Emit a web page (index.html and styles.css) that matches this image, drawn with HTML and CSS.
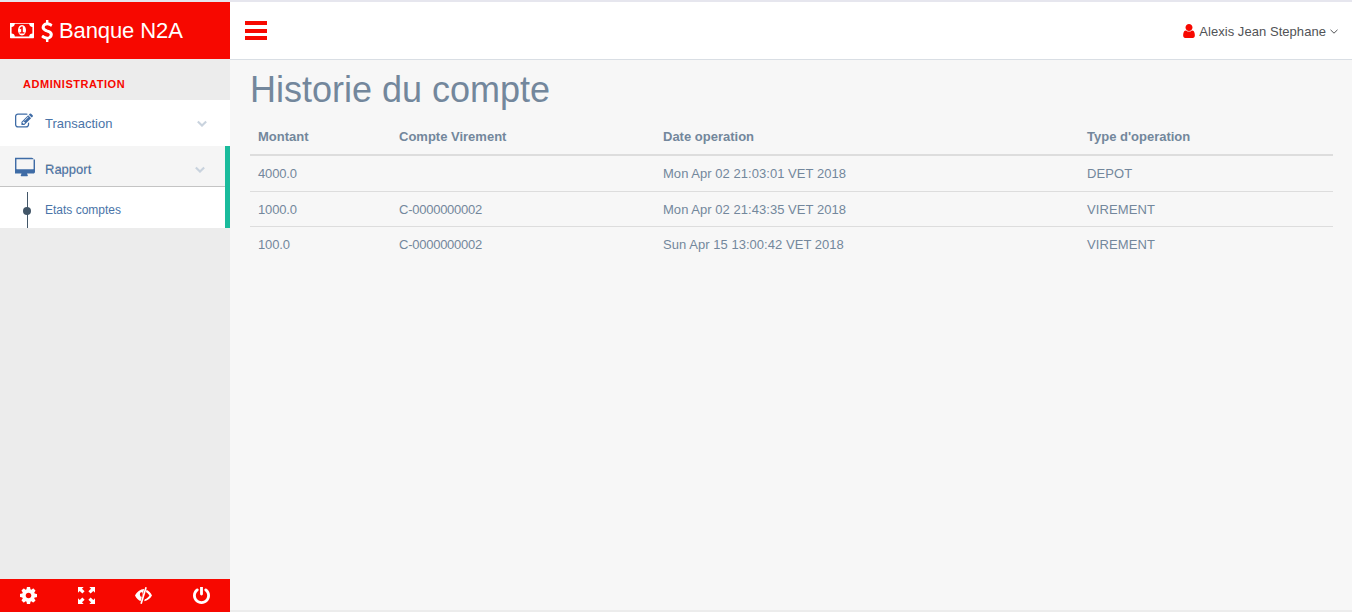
FILE: index.html
```html
<!DOCTYPE html>
<html lang="fr">
<head>
    <meta charset="UTF-8">
    <title>Banque N2A</title>
    <link rel="stylesheet" href="styles.css">
</head>
<body>
    <div class="layout">
        <aside class="sidebar">
            <div class="brand">
                <svg class="brand-money" viewBox="64 320 1920 1280"><path d="M832 1152h384v-96h-128v-448h-114l-148 137 77 80q42-37 55-57h2v288h-128v96zm512-256q0 70-21 142t-59.500 134-101.500 101-138 39-138-39-101.500-101-59.500-134-21-142 21-142 59.500-134 101.500-101 138-39 138 39 101.500 101 59.500 134 21 142zm512 256v-512q-106 0-181-75t-75-181h-1152q0 106-75 181t-181 75v512q106 0 181 75t75 181h1152q0-106 75-181t181-75zm128-832v1152q0 26-19 45t-45 19h-1792q-26 0-45-19t-19-45v-1152q0-26 19-45t45-19h1792q26 0 45 19t19 45z"/></svg>
                <svg class="brand-dollar" viewBox="320 0 1056 1792"><path d="M1362 1185q0 153-99.500 263.500t-258.500 136.500v175q0 14-9 23t-23 9h-135q-13 0-22.500-9.500t-9.500-22.500v-175q-66-9-127.500-31t-101.500-44.500-74-48-46.500-37.500-17.500-18q-17-21-2-41l103-135q7-10 23-12 15-2 24 9l2 2q113 99 243 125 37 8 74 8 81 0 142.500-43t61.500-122q0-28-15-53t-33.500-42-58.500-37.500-66-32-80-32.500q-39-16-61.500-25t-61.500-26.500-62.500-31-56.500-35.500-53.500-42.500-43.500-49-35.500-58-21-66.500-8.500-78q0-138 98-242t255-134v-180q0-13 9.500-22.500t22.500-9.500h135q14 0 23 9t9 23v176q57 6 110.500 23t87 33.500 63.500 37.500 39 29 15 14q17 18 5 38l-81 146q-8 15-23 16-14 3-27-7-3-3-14.500-12t-39-26.500-58.500-32-74.500-26-85.500-11.500q-95 0-155 43t-60 111q0 26 8.500 48t29.500 41.500 39.500 33 56 31 60.500 27 70 27.500q53 20 81 31.500t76 35 75.500 42.500 62 50 53 63.500 31.500 76.500 13 94z"/></svg>
                <span class="brand-name">Banque N2A</span>
            </div>
            <h3 class="menu-title">ADMINISTRATION</h3>
            <div class="menu-item">
                <svg class="menu-icon menu-icon-edit" viewBox="0 128 1792 1408"><path d="M888 1184l116-116-152-152-116 116v56h96v96h56zm440-720q-16-16-33 1l-350 350q-17 17-1 33t33-1l350-350q17-17 1-33zm80 594v190q0 119-84.500 203.500t-203.500 84.500h-832q-119 0-203.500-84.500t-84.500-203.500v-832q0-119 84.500-203.500t203.500-84.500h832q63 0 117 25 15 7 18 23 3 17-9 29l-49 49q-14 14-32 8-23-6-45-6h-832q-66 0-113 47t-47 113v832q0 66 47 113t113 47h832q66 0 113-47t47-113v-126q0-13 9-22l64-64q15-15 35-7t20 29zm-96-738l288 288-672 672h-288v-288zm444 132l-92 92-288-288 92-92q28-28 68-28t68 28l152 152q28 28 28 68t-28 68z"/></svg>
                <span class="menu-label">Transaction</span>
                <svg class="menu-chevron" viewBox="0 0 12 8"><path d="M1 1.500l5 5 5-5"/></svg>
            </div>
            <div class="menu-group">
                <div class="menu-item menu-item-open">
                    <svg class="menu-icon" viewBox="0 0 1792 1664"><path d="M1664 992v-832q0-13-9.500-22.500t-22.500-9.500h-1472q-13 0-22.500 9.500t-9.500 22.500v832q0 13 9.500 22.500t22.500 9.500h1472q13 0 22.500-9.500t9.500-22.500zm128-832v1088q0 66-47 113t-113 47h-544q0 37 16 77.500t32 71 16 43.500q0 26-19 45t-45 19h-512q-26 0-45-19t-19-45q0-14 16-44t32-70 16-78h-544q-66 0-113-47t-47-113v-1088q0-66 47-113t113-47h1472q66 0 113 47t47 113z"/></svg>
                    <span class="menu-label">Rapport</span>
                    <svg class="menu-chevron" viewBox="0 0 12 8"><path d="M1 1.500l5 5 5-5"/></svg>
                </div>
                <div class="submenu">
                    <span class="submenu-dot"></span>
                    <span>Etats comptes</span>
                </div>
            </div>
            <div class="sidebar-fill"></div>
            <div class="sidebar-footer">
                <svg viewBox="128 128 1536 1536"><path d="M1152 896q0-106-75-181t-181-75-181 75-75 181 75 181 181 75 181-75 75-181zm512-109v222q0 12-8 23t-20 13l-185 28q-19 54-39 91 35 50 107 138 10 12 10 25t-9 23q-27 37-99 108t-94 71q-12 0-26-9l-138-108q-44 23-91 38-16 136-29 186-7 28-36 28h-222q-14 0-24.500-8.500t-11.500-21.500l-28-184q-49-16-90-37l-141 107q-10 9-25 9-14 0-25-11-126-114-165-168-7-10-7-23 0-12 8-23 15-21 51-66.500t54-70.500q-27-50-41-99l-183-27q-13-2-21-12.500t-8-23.500v-222q0-12 8-23t19-13l186-28q14-46 39-92-40-57-107-138-10-12-10-24 0-10 9-23 26-36 98.500-107.500t94.500-71.500q13 0 26 10l138 107q44-23 91-38 16-136 29-186 7-28 36-28h222q14 0 24.500 8.500t11.500 21.500l28 184q49 16 90 37l142-107q9-9 24-9 13 0 25 10 129 119 165 170 7 8 7 22 0 12-8 23-15 21-51 66.500t-54 70.500q26 50 41 98l183 28q13 2 21 12.500t8 23.500z"/></svg>
                <svg viewBox="0 0 18 18"><path d="M0 0h6L4.200 1.800 7 4.600 4.600 7 1.800 4.200 0 6zM18 0v6l-1.800-1.800L13.400 7 11 4.600 13.800 1.800 12 0zM0 18v-6l1.800 1.800L4.600 11 7 13.400 4.200 16.200 6 18zM18 18h-6l1.800-1.800L11 13.400 13.400 11l2.800 2.800L18 12z"/></svg>
                <svg viewBox="0 0 18 18">
                    <path fill-rule="evenodd" d="M9.800 2C5.500 2.200 2 5 0 9c1.500 3 3.500 5 5.900 6.200zM6.600 5.600c1.200-.2 1.600.5 1.300 1.500L6.900 10.800C5.900 10.200 5.200 9.200 5.200 8c0-1.200.4-2.100 1.400-2.400z"/>
                    <path d="M10.900 0l1.700.5L7.300 18l-1.700-.5z"/>
                    <path d="M12.200 3C14.600 4.200 16.500 6.200 18 9c-1.900 3.300-4.800 5.500-8.300 6.200l.7-2.200c2.100-.7 3.700-2.100 4.900-4-1-1.600-2.200-2.800-3.700-3.700z"/>
                </svg>
                <svg viewBox="128 128 1536 1536"><path d="M1664 896q0 156-61 298t-164 245-245 164-298 61-298-61-245-164-164-245-61-298q0-182 80.500-343t226.500-270q43-32 95.500-25t83.500 50q32 42 24.500 94.500t-49.500 84.500q-98 74-151.500 181t-53.500 228q0 104 40.500 198.500t109.500 163.500 163.500 109.500 198.500 40.500 198.500-40.500 163.500-109.500 109.500-163.500 40.500-198.500q0-121-53.500-228t-151.500-181q-42-32-49.500-84.500t24.500-94.500q31-43 84-50t95 25q146 109 226.500 270t80.500 343zm-640-768v640q0 52-38 90t-90 38-90-38-38-90v-640q0-52 38-90t90-38 90 38 38 90z"/></svg>
            </div>
        </aside>
        <div class="content">
            <header class="topbar">
                <div class="burger"><span></span><span></span><span></span></div>
                <div class="user">
                    <svg class="user-icon" viewBox="256 128 1280 1536"><path d="M1536 1399q0 109-62.500 187t-150.500 78h-854q-88 0-150.500-78t-62.500-187q0-85 8.500-160.500t31.500-152 58.500-131 94-89 134.500-34.500q131 128 313 128t313-128q76 0 134.500 34.500t94 89 58.500 131 31.500 152 8.500 160.500zm-256-887q0 159-112.500 271.500t-271.500 112.500-271.500-112.500-112.500-271.500 112.500-271.500 271.500-112.500 271.500 112.500 112.500 271.500z"/></svg>
                    <span class="user-name">Alexis Jean Stephane</span>
                    <svg class="user-chevron" viewBox="0 0 8 5"><path d="M.5.800L4 4.200 7.500.800"/></svg>
                </div>
            </header>
            <main class="page">
                <h1>Historie du compte</h1>
                <table class="history">
                    <thead>
                        <tr>
                            <th class="col-amount">Montant</th>
                            <th class="col-account">Compte Virement</th>
                            <th class="col-date">Date operation</th>
                            <th>Type d'operation</th>
                        </tr>
                    </thead>
                    <tbody>
                        <tr>
                            <td class="cell-amount">4000.0</td>
                            <td class="cell-account"></td>
                            <td class="cell-date">Mon Apr 02 21:03:01 VET 2018</td>
                            <td class="cell-type">DEPOT</td>
                        </tr>
                        <tr>
                            <td class="cell-amount">1000.0</td>
                            <td class="cell-account">C-0000000002</td>
                            <td class="cell-date">Mon Apr 02 21:43:35 VET 2018</td>
                            <td class="cell-type">VIREMENT</td>
                        </tr>
                        <tr>
                            <td class="cell-amount">100.0</td>
                            <td class="cell-account">C-0000000002</td>
                            <td class="cell-date">Sun Apr 15 13:00:42 VET 2018</td>
                            <td class="cell-type">VIREMENT</td>
                        </tr>
                    </tbody>
                </table>
            </main>
        </div>
    </div>
</body>
</html>
```

FILE: styles.css
```css
html, body {
    height: 100%;
}

body {
    margin: 0;
    font-family: "Liberation Sans", Arial, sans-serif;
    font-size: 13px;
    color: #73879c;
    background-color: #f7f7f7;
    overflow: hidden;
}

.layout {
    display: flex;
    height: 100vh;
    box-sizing: border-box;
    border-top: 2px solid #e6e6ee;
}

/* sidebar */
.sidebar {
    display: flex;
    flex-direction: column;
    flex: none;
    width: 230px;
    background-color: #ececec;
}

.brand {
    display: flex;
    align-items: center;
    height: 57px;
    padding-left: 10px;
    background-color: #f70800;
    color: #fff;
    font-size: 22px;
}

.brand svg {
    fill: #fff;
}

.brand-money {
    width: 24px;
    height: 16px;
    margin-right: 6px;
}

.brand-dollar {
    width: 13px;
    height: 22px;
    margin-right: 6px;
}

.brand-name {
    padding-top: 1px;
    letter-spacing: -0.1px;
}

.menu-title {
    margin: 0;
    height: 41px;
    box-sizing: border-box;
    padding: 19px 0 0 23px;
    font-size: 11px;
    line-height: 13px;
    letter-spacing: 0.55px;
    color: #f70800;
}

.menu-item {
    display: flex;
    align-items: center;
    height: 46px;
    padding-left: 15px;
    box-sizing: border-box;
    background-color: #fff;
    color: #4a74a8;
}

.menu-icon {
    width: 20px;
    height: 20px;
    margin-top: -5px;
    margin-right: 10px;
    fill: #3f6ca6;
}

.menu-icon-edit {
    width: 18px;
    height: 15px;
    margin-right: 12px;
}

.menu-label {
    flex: 1;
}

.menu-chevron {
    width: 10px;
    height: 7px;
    margin-right: 23px;
    fill: none;
    stroke: #c9d3de;
    stroke-width: 2.5;
}

.menu-group {
    border-right: 5px solid #1abb9c;
}

.menu-item-open {
    height: 41px;
    padding-top: 6px;
    background-color: #f5f5f5;
    border-bottom: 1px solid #c4c4c4;
    text-shadow: rgba(0, 0, 0, 0.25) 0 -1px 0;
}

.menu-item-open .menu-chevron {
    margin-right: 20px;
}

.submenu {
    position: relative;
    display: flex;
    align-items: center;
    height: 41px;
    box-sizing: border-box;
    padding: 5px 0 0 45px;
    background-color: #fff;
    color: #4a74a8;
    font-size: 12px;
}

.submenu::before {
    content: "";
    position: absolute;
    left: 27px;
    top: 5px;
    bottom: 0;
    width: 1px;
    background-color: #425668;
}

.submenu-dot {
    position: absolute;
    left: 23px;
    top: 20px;
    width: 8px;
    height: 8px;
    border-radius: 50%;
    background-color: #425668;
}

.sidebar-fill {
    flex: 1;
}

.sidebar-footer {
    display: grid;
    grid-template-columns: repeat(4, 1fr);
    align-items: center;
    justify-items: center;
    height: 33px;
    background-color: #f70800;
}

.sidebar-footer svg {
    width: 17px;
    height: 17px;
    fill: #fff;
}

/* right side */
.content {
    flex: 1;
    display: flex;
    flex-direction: column;
    min-width: 0;
}

.topbar {
    display: flex;
    align-items: center;
    justify-content: space-between;
    flex: none;
    height: 58px;
    box-sizing: border-box;
    padding: 0 14px 0 15px;
    background-color: #fff;
    border-bottom: 1px solid #d9dee4;
}

.burger {
    display: flex;
    flex-direction: column;
    gap: 3.5px;
    width: 22px;
}

.burger span {
    height: 4px;
    background-color: #f70800;
}

.user {
    display: flex;
    align-items: center;
    padding-top: 1px;
    color: #515356;
}

.user-icon {
    width: 12px;
    height: 14px;
    margin-right: 4px;
    fill: #f70800;
}

.user-name {
    letter-spacing: 0.05px;
}

.user-chevron {
    width: 8px;
    height: 5px;
    margin-left: 4px;
    fill: none;
    stroke: #515356;
    stroke-width: 1;
}

.page {
    flex: 1;
    padding: 0 19px 0 20px;
    border-bottom: 2px solid #ececec;
}

h1 {
    margin: 10px 0 0;
    font-size: 36px;
    font-weight: 400;
    line-height: 40px;
}

.history {
    width: 100%;
    margin-top: 9px;
    border-collapse: collapse;
    table-layout: fixed;
}

.history th {
    height: 36px;
    padding: 0 8px;
    box-sizing: border-box;
    text-align: left;
    border-bottom: 2px solid #ddd;
}

.history td {
    padding: 0 8px;
    height: 34px;
    border-bottom: 1px solid #ddd;
}

.history tbody tr:first-child td {
    height: 35px;
}

.history tr:last-child td {
    border-bottom: none;
}

.col-amount {
    width: 141px;
}

.col-account {
    width: 264px;
}

.col-date {
    width: 424px;
}

.cell-amount {
    letter-spacing: -0.15px;
}

.cell-account {
    letter-spacing: -0.25px;
}

.cell-date {
    letter-spacing: 0.04px;
}

.cell-type {
    letter-spacing: 0.1px;
}
```
